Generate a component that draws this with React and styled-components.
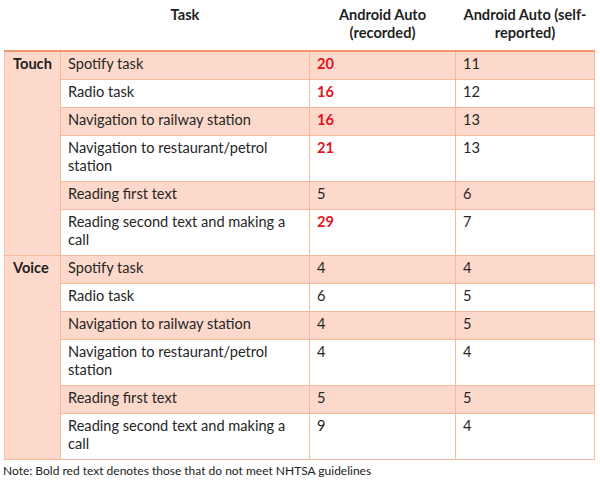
import styled, { createGlobalStyle } from 'styled-components'

const GlobalStyle = createGlobalStyle`
  body {
    margin: 0;
    background: #fff;
    font-family: Lato, "Liberation Sans", sans-serif;
    color: #262626;
  }
`

const rows = [
  { group: 'Touch', items: [
    ['Spotify task', 20, 11, true],
    ['Radio task', 16, 12, true],
    ['Navigation to railway station', 16, 13, true],
    ['Navigation to restaurant/petrol station', 21, 13, true],
    ['Reading first text', 5, 6, false],
    ['Reading second text and making a call', 29, 7, true],
  ] },
  { group: 'Voice', items: [
    ['Spotify task', 4, 4, false],
    ['Radio task', 6, 5, false],
    ['Navigation to railway station', 4, 5, false],
    ['Navigation to restaurant/petrol station', 4, 4, false],
    ['Reading first text', 5, 5, false],
    ['Reading second text and making a call', 9, 4, false],
  ] },
]

function App() {
  return (
    <Page>
      <GlobalStyle />
      <Table>
        <colgroup>
          <col style={{ width: 56 }} />
          <col style={{ width: 249 }} />
          <col style={{ width: 146 }} />
          <col style={{ width: 139 }} />
        </colgroup>
        <thead>
          <tr>
            <HeadCell />
            <HeadCell>Task</HeadCell>
            <HeadCell>Android Auto<br />(recorded)</HeadCell>
            <HeadCell>Android Auto (self-<br />reported)</HeadCell>
          </tr>
        </thead>
        <tbody>
          {rows.map((g, gi) =>
            g.items.map(([task, rec, self, red], i) => (
              <Row key={g.group + i} $shaded={i % 2 === 0} $top={gi === 0 && i === 0}>
                {i === 0 && <GroupCell rowSpan={g.items.length}>{g.group}</GroupCell>}
                <Cell>{task}</Cell>
                <Cell $red={red}>{rec}</Cell>
                <Cell>{self}</Cell>
              </Row>
            ))
          )}
        </tbody>
      </Table>
      <Note>Note: Bold red text denotes those that do not meet NHTSA guidelines</Note>
    </Page>
  )
}

export default App

/////  Style  /////

const Page = styled.div`
  width: 600px;
  padding: 0 6px 0 4px;
  box-sizing: border-box;
`

const Table = styled.table`
  width: 590px;
  table-layout: fixed;
  border-collapse: collapse;
  font-size: 14.6px;
  line-height: 18px;
`

const HeadCell = styled.th`
  font-weight: 700;
  text-align: center;
  vertical-align: top;
  padding: 6px 4px 8px;
  color: #1f1f1f;
`

const Row = styled.tr`
  background: ${p => (p.$shaded ? '#fcd9cb' : '#fff')};
  border-top: ${p => (p.$top ? '2px solid #f3976d' : '1px solid #f7b89c')};
`

const GroupCell = styled.td`
  background: #fcd9cb;
  font-weight: 700;
  vertical-align: top;
  padding: 3px 8px 6px;
  border-left: 1px solid #f7c1a8;
  border-right: 1px solid #f7b89c;
  border-bottom: 1px solid #f7b89c;
  color: #1f1f1f;
`

const Cell = styled.td`
  vertical-align: top;
  padding: 3px 10px 6px 7px;
  border-right: 1px solid #f7b89c;
  border-bottom: 1px solid #f7b89c;
  color: ${p => (p.$red ? '#e5131f' : '#262626')};
  font-weight: ${p => (p.$red ? 700 : 400)};
`

const Note = styled.div`
  margin-top: 4px;
  margin-left: -1px;
  font-size: 12px;
  line-height: 14px;
  color: #222;
`
